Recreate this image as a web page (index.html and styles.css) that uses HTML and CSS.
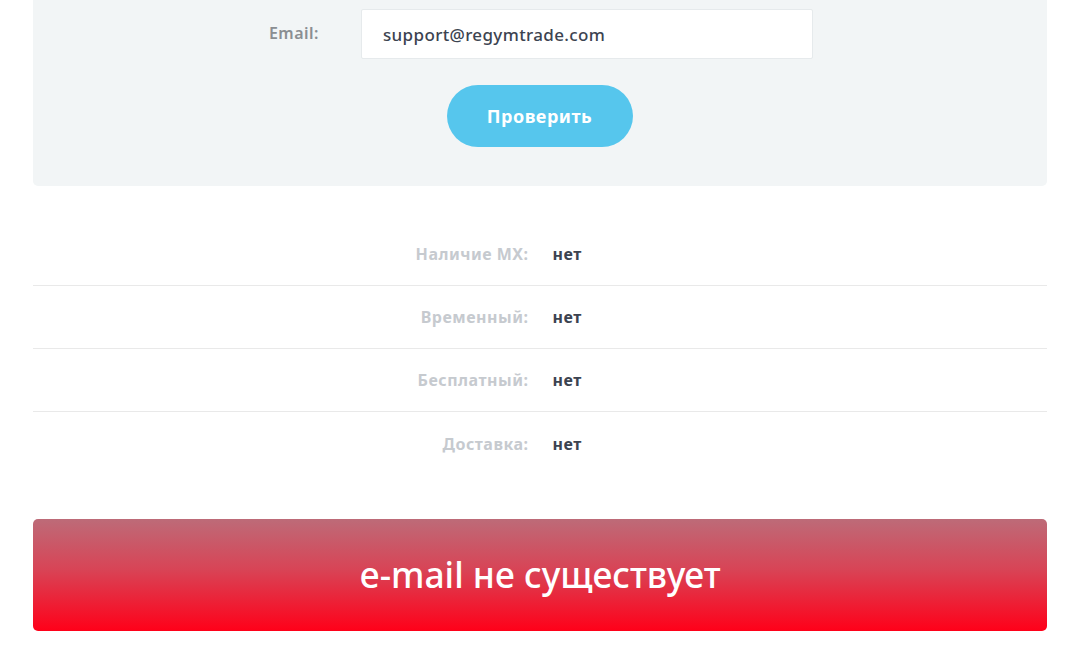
FILE: index.html
```html
<!DOCTYPE html>
<html lang="ru">
<head>
<meta charset="utf-8">
<title>Проверка e-mail</title>
<link rel="stylesheet" href="styles.css">
</head>
<body>
<div class="wrap">
  <section class="panel">
    <div class="form-row">
      <label class="form-label" for="email">Email:</label>
      <div class="input">support@regymtrade.com</div>
    </div>
    <div class="actions">
      <button class="btn">Проверить</button>
    </div>
  </section>

  <section class="results">
    <div class="row"><span class="key">Наличие MX:</span><span class="val">нет</span></div>
    <div class="row"><span class="key">Временный:</span><span class="val">нет</span></div>
    <div class="row"><span class="key">Бесплатный:</span><span class="val">нет</span></div>
    <div class="row"><span class="key">Доставка:</span><span class="val">нет</span></div>
  </section>

  <div class="verdict">e-mail не существует</div>
</div>
</body>
</html>
```

FILE: styles.css
```css
* { box-sizing: border-box; }
html, body { margin: 0; padding: 0; background: #ffffff; }
body {
  font-family: "Noto Sans", "Open Sans", sans-serif;
  color: #3c4350;
}
.wrap {
  width: 1014px;
  margin: 0 0 0 33px;
}
.panel {
  background: #f2f5f6;
  border-radius: 0 0 5px 5px;
  padding: 9px 0 39px;
}
.form-row {
  display: flex;
  align-items: center;
  padding-left: 200px;
}
.form-label {
  width: 86px;
  margin-right: 42px;
  text-align: right;
  font-size: 16px;
  font-weight: 600;
  letter-spacing: 0.5px;
  color: #8a8e92;
  position: relative;
  top: -1px;
}
.input {
  width: 452px;
  height: 50px;
  background: #fff;
  border: 1px solid #e6eaec;
  border-radius: 2px;
  padding: 0 21px;
  display: flex;
  align-items: center;
  font-size: 17px;
  font-weight: 500;
  letter-spacing: 0.35px;
  color: #3c4350;
}
.actions {
  display: flex;
  justify-content: center;
  margin-top: 26px;
}
.btn {
  width: 186px;
  height: 62px;
  border: 0;
  border-radius: 31px;
  background: #56c6ed;
  color: #fff;
  font-family: inherit;
  font-size: 18px;
  font-weight: 700;
  letter-spacing: 0.5px;
  margin-left: -1px;
}
.results {
  margin-top: 37px;
}
.row {
  display: grid;
  grid-template-columns: 1fr 1fr;
  column-gap: 25px;
  align-items: center;
  height: 63px;
  border-bottom: 1px solid #e9e9e9;
  font-size: 16px;
  font-weight: 700;
  letter-spacing: 0.5px;
}
.row:last-child { border-bottom: 0; }
.key {
  text-align: right;
  color: #c6cacf;
  margin-right: -1px;
}
.val {
  color: #3c4350;
}
.verdict {
  margin-top: 44px;
  height: 112px;
  border-radius: 5px;
  background: linear-gradient(to bottom, #bd6b78 0%, #d84456 45%, #ff0019 100%);
  color: #fff;
  display: flex;
  align-items: center;
  justify-content: center;
  font-size: 35.3px;
  font-weight: 500;
  padding-bottom: 3px;
}
```
